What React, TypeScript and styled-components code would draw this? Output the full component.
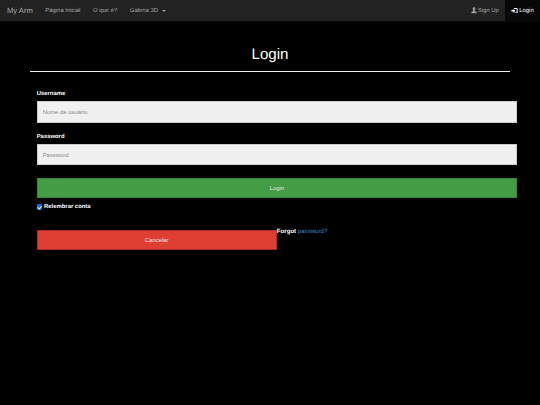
import React from "react";
import styled, { createGlobalStyle } from "styled-components";

const Global = createGlobalStyle`
  html, body {
    margin: 0;
    padding: 0;
    background: #000;
    font-family: "Liberation Sans", Arial, sans-serif;
    text-rendering: geometricPrecision;
  }
  * { box-sizing: border-box; }
`;

const Page = styled.div`
  min-height: 405px;
  background: #000;
  will-change: opacity;
`;

const Navbar = styled.nav`
  display: flex;
  align-items: stretch;
  justify-content: space-between;
  height: 22px;
  background: #222;
  border-bottom: 1px solid #080808;
`;

const NavGroup = styled.div`
  display: flex;
  align-items: stretch;
`;

const Brand = styled.a`
  display: flex;
  align-items: center;
  padding: 0 6.3px 0 7px;
  font-size: 7.6px;
  color: #a8a8a8;
`;

const NavLink = styled.a<{ $active?: boolean }>`
  display: flex;
  align-items: center;
  gap: 1px;
  padding: 0 6.3px;
  font-size: 5.9px;
  color: ${(p) => (p.$active ? "#fff" : "#a8a8a8")};
  background: ${(p) => (p.$active ? "#080808" : "transparent")};
`;

const Caret = styled.span`
  width: 0;
  height: 0;
  margin-left: 3px;
  border-top: 2px solid #9d9d9d;
  border-left: 2px solid transparent;
  border-right: 2px solid transparent;
`;

const Main = styled.main`
  padding: 0 30px;
`;

const Header = styled.header`
  height: 50px;
  padding-top: 22.5px;
  margin-bottom: 17px;
  border-bottom: 1px solid #eee;
`;

const Title = styled.h1`
  margin: 0;
  font-size: 15.1px;
  line-height: 20px;
  font-weight: 400;
  color: #fff;
  text-align: center;
`;

const Form = styled.form`
  display: flex;
  flex-direction: column;
  padding-left: 6.7px;
  margin-right: -7px;
`;

const Label = styled.label`
  font-size: 5.9px;
  font-weight: 700;
  line-height: 10.5px;
  height: 9px;
  margin-bottom: 3.3px;
  color: #fff;
`;

const Input = styled.input`
  display: block;
  width: 100%;
  height: 21.4px;
  padding: 0 5px;
  margin-bottom: 9px;
  background: #f0f0f0;
  border: 1px solid #ccc;
  border-radius: 0;
  font-family: inherit;
  font-size: 5.9px;
  outline: none;
  &::placeholder {
    color: #8a8a8a;
    opacity: 1;
  }
`;

const Button = styled.button<{ $tone: "ok" | "cancel" }>`
  display: block;
  height: 20.7px;
  padding: 0;
  font-family: inherit;
  font-size: 5.9px;
  color: #e6e6e6;
  background: ${(p) => (p.$tone === "ok" ? "#449d44" : "#de3f32")};
  border: 1px solid ${(p) => (p.$tone === "ok" ? "#398439" : "#ac2925")};
`;

const SubmitRow = styled.div`
  margin-top: 3.3px;
  & > button {
    width: 100%;
  }
`;

const Remember = styled.label`
  display: flex;
  align-items: center;
  gap: 2px;
  height: 9px;
  margin-top: 4px;
  font-size: 5.9px;
  font-weight: 700;
  color: #fff;
`;

const Check = styled.input`
  position: relative;
  appearance: none;
  width: 5.4px;
  height: 5.4px;
  margin: 0;
  border-radius: 1px;
  background: #0b6fe0;
  &::after {
    content: "";
    position: absolute;
    left: 1.8px;
    top: 0.5px;
    width: 1.8px;
    height: 3.2px;
    border: solid #fff;
    border-width: 0 0.9px 0.9px 0;
    transform: rotate(40deg);
  }
`;

const FootRow = styled.div`
  display: flex;
  align-items: flex-start;
  margin-top: 18.3px;
`;

const CancelCell = styled.div`
  width: 50%;
  & > button {
    width: 100%;
  }
`;

const Forgot = styled.span`
  font-size: 6.1px;
  font-weight: 700;
  line-height: 9px;
  margin-top: -2.4px;
  color: #fff;
`;

const ForgotLink = styled.a`
  font-weight: 400;
  color: #3f86c8;
`;

function UserIcon() {
  return (
    <svg width="6" height="6.500" viewBox="0 0 14 14" fill="#9d9d9d">
      <path d="M7 0c2 0 3.200 1.400 3.200 3.600 0 1.700-.7 3.200-1.600 4v1.200c2 .6 4.400 1.300 4.400 2.700V14H1v-2.500c0-1.400 2.400-2.100 4.400-2.700V7.600c-.9-.8-1.600-2.300-1.600-4C3.800 1.400 5 0 7 0z" />
    </svg>
  );
}

function LoginIcon() {
  return (
    <svg width="7" height="5.500" viewBox="0 0 16 14" fill="#fff">
      <path d="M0 5h5V2l5 5-5 5V9H0z" />
      <path d="M7 0h6.500A2.500 2.500 0 0 1 16 2.500v9a2.500 2.500 0 0 1-2.500 2.500H7v-2.500h6a.500.500 0 0 0 .500-.500V3a.500.500 0 0 0-.500-.500H7z" />
    </svg>
  );
}

export default function App() {
  return (
    <Page>
      <Global />
      <Navbar>
        <NavGroup>
          <Brand>My Arm</Brand>
          <NavLink>Página Inicial</NavLink>
          <NavLink>O que é?</NavLink>
          <NavLink>
            Galeria 3D <Caret />
          </NavLink>
        </NavGroup>
        <NavGroup>
          <NavLink>
            <UserIcon /> Sign Up
          </NavLink>
          <NavLink $active>
            <LoginIcon />Login
          </NavLink>
        </NavGroup>
      </Navbar>
      <Main>
        <Header>
          <Title>Login</Title>
        </Header>
        <Form onSubmit={(e) => e.preventDefault()}>
          <Label>Username</Label>
          <Input placeholder="Nome de usuário" />
          <Label>Password</Label>
          <Input type="password" placeholder="Password" />
          <SubmitRow>
            <Button $tone="ok" type="submit">Login</Button>
          </SubmitRow>
          <Remember>
            <Check type="checkbox" defaultChecked /> Relembrar conta
          </Remember>
          <FootRow>
            <CancelCell>
              <Button $tone="cancel" type="button">Cancelar</Button>
            </CancelCell>
            <Forgot>
              Forgot <ForgotLink>password?</ForgotLink>
            </Forgot>
          </FootRow>
        </Form>
      </Main>
    </Page>
  );
}
